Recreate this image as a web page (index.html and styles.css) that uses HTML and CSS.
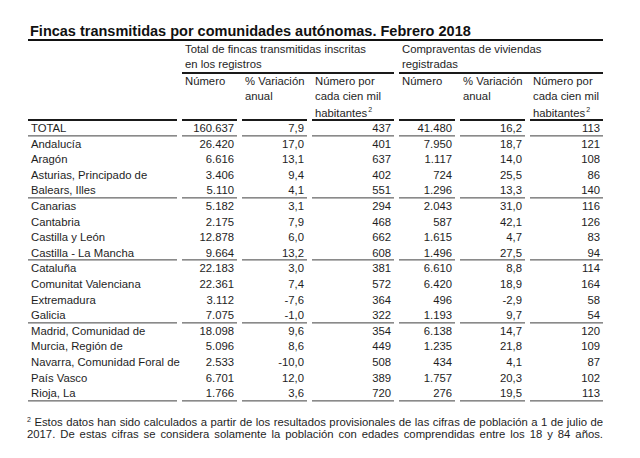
FILE: index.html
```html
<!DOCTYPE html>
<html lang="es">
<head>
<meta charset="utf-8">
<title>Fincas transmitidas por comunidades autónomas</title>
<link rel="stylesheet" href="styles.css">
</head>
<body>
<div class="page">
  <h1 class="title">Fincas transmitidas por comunidades autónomas. Febrero 2018</h1>
  <div class="table">
    <div class="gh-blank"></div>
    <div class="gh">Total de fincas transmitidas inscritas<br>en los registros</div>
    <div class="gh">Compraventas de viviendas<br>registradas</div>

    <div class="sh"></div>
    <div class="sh">Número</div>
    <div class="sh">% Variación<br>anual</div>
    <div class="sh">Número por<br>cada cien mil<br>habitantes<span class="sup">2</span></div>
    <div class="sh">Número</div>
    <div class="sh">% Variación<br>anual</div>
    <div class="sh">Número por<br>cada cien mil<br>habitantes<span class="sup">2</span></div>

    <div class="row sep"><span class="l">TOTAL</span><span>160.637</span><span>7,9</span><span>437</span><span>41.480</span><span>16,2</span><span>113</span></div>
    <div class="row"><span class="l">Andalucía</span><span>26.420</span><span>17,0</span><span>401</span><span>7.950</span><span>18,7</span><span>121</span></div>
    <div class="row"><span class="l">Aragón</span><span>6.616</span><span>13,1</span><span>637</span><span>1.117</span><span>14,0</span><span>108</span></div>
    <div class="row"><span class="l">Asturias, Principado de</span><span>3.406</span><span>9,4</span><span>402</span><span>724</span><span>25,5</span><span>86</span></div>
    <div class="row sep"><span class="l">Balears, Illes</span><span>5.110</span><span>4,1</span><span>551</span><span>1.296</span><span>13,3</span><span>140</span></div>
    <div class="row"><span class="l">Canarias</span><span>5.182</span><span>3,1</span><span>294</span><span>2.043</span><span>31,0</span><span>116</span></div>
    <div class="row"><span class="l">Cantabria</span><span>2.175</span><span>7,9</span><span>468</span><span>587</span><span>42,1</span><span>126</span></div>
    <div class="row"><span class="l">Castilla y León</span><span>12.878</span><span>6,0</span><span>662</span><span>1.615</span><span>4,7</span><span>83</span></div>
    <div class="row sep"><span class="l">Castilla - La Mancha</span><span>9.664</span><span>13,2</span><span>608</span><span>1.496</span><span>27,5</span><span>94</span></div>
    <div class="row"><span class="l">Cataluña</span><span>22.183</span><span>3,0</span><span>381</span><span>6.610</span><span>8,8</span><span>114</span></div>
    <div class="row"><span class="l">Comunitat Valenciana</span><span>22.361</span><span>7,4</span><span>572</span><span>6.420</span><span>18,9</span><span>164</span></div>
    <div class="row"><span class="l">Extremadura</span><span>3.112</span><span>-7,6</span><span>364</span><span>496</span><span>-2,9</span><span>58</span></div>
    <div class="row sep"><span class="l">Galicia</span><span>7.075</span><span>-1,0</span><span>322</span><span>1.193</span><span>9,7</span><span>54</span></div>
    <div class="row"><span class="l">Madrid, Comunidad de</span><span>18.098</span><span>9,6</span><span>354</span><span>6.138</span><span>14,7</span><span>120</span></div>
    <div class="row"><span class="l">Murcia, Región de</span><span>5.096</span><span>8,6</span><span>449</span><span>1.235</span><span>21,8</span><span>109</span></div>
    <div class="row"><span class="l">Navarra, Comunidad Foral de</span><span>2.533</span><span>-10,0</span><span>508</span><span>434</span><span>4,1</span><span>87</span></div>
    <div class="row"><span class="l">País Vasco</span><span>6.701</span><span>12,0</span><span>389</span><span>1.757</span><span>20,3</span><span>102</span></div>
    <div class="row sep"><span class="l">Rioja, La</span><span>1.766</span><span>3,6</span><span>720</span><span>276</span><span>19,5</span><span>113</span></div>
  </div>
  <p class="note"><span class="nsup">2</span> Estos datos han sido calculados a partir de los resultados provisionales de las cifras de población a 1 de julio de 2017. De estas cifras se considera solamente la población con edades comprendidas entre los 18 y 84 años.</p>
</div>
</body>
</html>
```

FILE: styles.css
```css
html, body {
  margin: 0;
  padding: 0;
  background: #fff;
}

.page {
  padding: 23px 0 0 28px;
  width: 575px;
  font-family: "Liberation Sans", Arial, sans-serif;
  color: #1e1e1e;
}

.title {
  margin: 0;
  padding-left: 2px;
  font-size: 14.5px;
  font-weight: bold;
  line-height: 16px;
  color: #111;
  border-bottom: 2px solid #111;
  white-space: nowrap;
}

.table {
  display: grid;
  grid-template-columns: 149px 55px 65px 82px 56px 65px 73px;
  column-gap: 5px;
  font-size: 11.3px;
}

.gh-blank {
  grid-column: 1;
}

.gh {
  grid-column: span 3;
  padding: 1px 3px 0;
  line-height: 15px;
  border-bottom: 2px solid #1a1a1a;
  white-space: nowrap;
}

.sh {
  height: 44px;
  padding: 0 3px 1px;
  line-height: 14.6px;
  border-bottom: 2px solid #1a1a1a;
  white-space: nowrap;
}

.sup {
  font-size: 7px;
  vertical-align: 5px;
  margin-left: 1px;
}

.row {
  display: contents;
}

.row > span {
  height: 15.6px;
  line-height: 15.6px;
  padding: 0 3px;
  text-align: right;
  white-space: nowrap;
}

.row > span.l {
  text-align: left;
}

.row.sep > span {
  box-shadow: inset 0 -1px 0 #b4b4b4, inset 0 -2px 0 #8a8a8a;
}

.note {
  margin: 12px 0 0 -1px;
  width: 576px;
  font-size: 11.3px;
  line-height: 12px;
  text-align: justify;
  text-align-last: justify;
  color: #1e1e1e;
}

.nsup {
  font-size: 7px;
  vertical-align: 4px;
}
```
